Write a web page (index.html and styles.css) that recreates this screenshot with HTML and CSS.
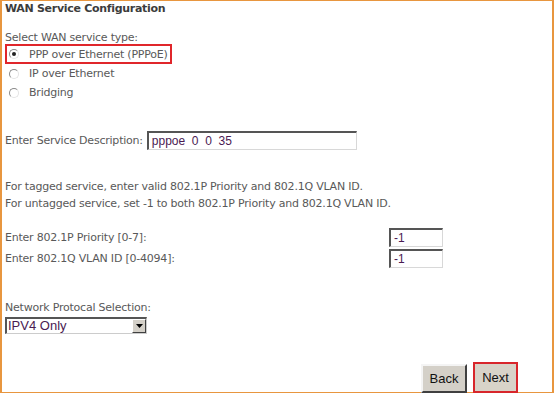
FILE: index.html
```html
<!DOCTYPE html>
<html>
<head>
<meta charset="utf-8">
<link rel="stylesheet" href="styles.css">
</head>
<body>
<div class="frame">
  <div class="title">WAN Service Configuration</div>
  <div class="label select-type">Select WAN service type:</div>
  <div class="radios">
    <label class="radio-row hl"><span class="radio checked"></span>PPP over Ethernet (PPPoE)</label>
    <label class="radio-row"><span class="radio"></span>IP over Ethernet</label>
    <label class="radio-row"><span class="radio"></span>Bridging</label>
  </div>
  <div class="desc-row">
    <span class="label">Enter Service Description:</span>
    <span class="input wide">pppoe&nbsp; 0&nbsp; 0&nbsp; 35</span>
  </div>
  <div class="notes">
    <div>For tagged service, enter valid 802.1P Priority and 802.1Q VLAN ID.</div>
    <div>For untagged service, set -1 to both 802.1P Priority and 802.1Q VLAN ID.</div>
  </div>
  <div class="vlan">
    <div class="vrow"><span class="label">Enter 802.1P Priority [0-7]:</span><span class="input small">-1</span></div>
    <div class="vrow"><span class="label">Enter 802.1Q VLAN ID [0-4094]:</span><span class="input small">-1</span></div>
  </div>
  <div class="label proto">Network Protocal Selection:</div>
  <div class="select"><span class="sel-text">IPV4 Only</span><span class="sel-btn"><svg width="7" height="4" viewBox="0 0 7 4"><path d="M0 0H7L3.5 4Z" fill="#000"/></svg></span></div>
  <div class="buttons">
    <span class="btn">Back</span>
    <span class="btn next"><span class="btn-inner">Next</span></span>
  </div>
</div>
</body>
</html>
```
FILE: styles.css
```css
html, body { margin: 0; padding: 0; background: #fff; }
body { width: 554px; height: 393px; overflow: hidden; }
.frame {
  box-sizing: border-box;
  width: 554px; height: 393px;
  border-top: 1px solid #e8963f;
  border-left: 2px solid #e8963f;
  border-right: 2px solid #e8963f;
  border-bottom: 1px solid #e8963f;
  padding: 0 0 0 3px;
  font-family: Tahoma, "DejaVu Sans", sans-serif;
  font-size: 11px;
  letter-spacing: -0.22px;
  color: #595959;
  white-space: nowrap;
}
.title { font-weight: bold; color: #3c3c3c; height: 15px; line-height: 15px; letter-spacing: -0.3px; }
.select-type { margin-top: 16px; line-height: 12px; height: 12px; }
.radios { display: flex; flex-direction: column; align-items: flex-start; }
.radio-row { display: flex; align-items: center; height: 19px; box-sizing: border-box; }
.radio-row.hl { border: 2px solid #e0262b; width: 167px; height: 20px; }
.radio { width: 10px; height: 10px; box-sizing: border-box; border-radius: 50%; border: 1px solid #8a8a8a; border-right-color: #e4e4e4; border-bottom-color: #e4e4e4; margin: 0 10px 0 4px; position: relative; background: #fff; flex: none; }
.radio-row.hl .radio { margin-left: 2px; }
.radio.checked::after { content: ""; position: absolute; left: 2px; top: 2px; width: 4px; height: 4px; border-radius: 50%; background: #222; }
.desc-row { display: flex; align-items: center; margin-top: 29px; height: 19px; }
.desc-row .label { margin-right: 4px; }
.input { box-sizing: border-box; display: inline-block; border: 1px solid #d8d8d8; border-top: 2px solid #555; border-left: 2px solid #555; font-family: "Liberation Sans", Arial, sans-serif; font-size: 12px; letter-spacing: 0; color: #4a1a52; height: 19px; line-height: 16px; padding-left: 3px; background: #fff; }
.input.wide { width: 210px; }
.input.small { width: 54px; }
.notes { margin-top: 28px; line-height: 17px; }
.vlan { margin-top: 16px; width: 438px; display: flex; flex-direction: column; gap: 2px; }
.vrow { display: flex; justify-content: space-between; align-items: center; height: 19px; }
.proto { margin-top: 33px; line-height: 14px; height: 14px; }
.select { display: flex; width: 142px; height: 17px; box-sizing: border-box; border: 1px solid #ccc; border-top: 2px solid #555; border-left: 2px solid #555; font-family: "Liberation Sans", Arial, sans-serif; font-size: 13px; letter-spacing: 0; color: #4a1a52; margin-top: 2px; }
.sel-text { flex: 1; line-height: 14px; padding-left: 1px; }
.sel-btn { width: 14px; height: 14px; box-sizing: border-box; background: #d4d0c8; border: 1px solid; border-color: #fff #404040 #404040 #fff; display: flex; align-items: center; justify-content: center; }
.buttons { display: flex; justify-content: flex-end; align-items: flex-end; gap: 6px; margin-top: 28px; padding-right: 34px; }
.btn { box-sizing: border-box; height: 29px; width: 46px; display: flex; align-items: center; justify-content: center; background: #d4d0c8; border: 2px solid; border-color: #f4f4f4 #404040 #404040 #f4f4f4; font-family: "Liberation Sans", Arial, sans-serif; font-size: 13px; letter-spacing: 0; color: #111; }
.btn.next { border: 2px solid #d8262b; background: #d8d3c8; height: 31px; width: 45px; padding: 0; }
.btn-inner { width: 100%; height: 100%; display: flex; align-items: center; justify-content: center; }
```
